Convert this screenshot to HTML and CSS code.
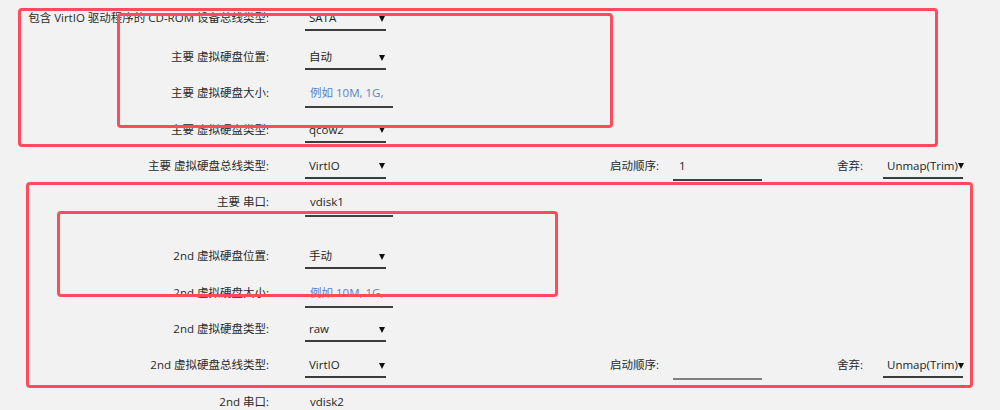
FILE: index.html
```html
<!DOCTYPE html>
<html lang="zh-CN">
<head>
  <meta charset="UTF-8" />
  <meta name="viewport" content="width=device-width, initial-scale=1" />
  <title>虚拟机设置</title>
  <link rel="stylesheet" href="styles.css">
</head>
<body>
  <div class="form">
    <div class="row first">
      <label class="lbl">包含 VirtIO 驱动程序的 CD-ROM 设备总线类型:</label>
      <div class="select"><span>SATA</span><i class="caret"></i></div>
    </div>

    <!-- 主要 磁盘 -->
    <div class="row">
      <label class="lbl">主要 虚拟硬盘位置:</label>
      <div class="select"><span>自动</span><i class="caret"></i></div>
    </div>
    <div class="row">
      <label class="lbl">主要 虚拟硬盘大小:</label>
      <div class="input placeholder">例如 10M, 1G,</div>
    </div>
    <div class="row">
      <label class="lbl">主要 虚拟硬盘类型:</label>
      <div class="select"><span>qcow2</span><i class="caret"></i></div>
    </div>
    <div class="row">
      <label class="lbl">主要 虚拟硬盘总线类型:</label>
      <div class="select"><span>VirtIO</span><i class="caret"></i></div>
      <label class="lbl boot">启动顺序:</label>
      <div class="input short">1</div>
      <label class="lbl discard">舍弃:</label>
      <div class="select trim"><span>Unmap(Trim)</span><i class="caret"></i></div>
    </div>
    <div class="row">
      <label class="lbl">主要 串口:</label>
      <div class="input">vdisk1</div>
    </div>

    <!-- 2nd 磁盘 -->
    <div class="spacer"></div>
    <div class="row">
      <label class="lbl">2nd 虚拟硬盘位置:</label>
      <div class="select"><span>手动</span><i class="caret"></i></div>
    </div>
    <div class="row">
      <label class="lbl">2nd 虚拟硬盘大小:</label>
      <div class="input placeholder">例如 10M, 1G,</div>
    </div>
    <div class="row">
      <label class="lbl">2nd 虚拟硬盘类型:</label>
      <div class="select"><span>raw</span><i class="caret"></i></div>
    </div>
    <div class="row">
      <label class="lbl">2nd 虚拟硬盘总线类型:</label>
      <div class="select"><span>VirtIO</span><i class="caret"></i></div>
      <label class="lbl boot">启动顺序:</label>
      <div class="input short empty"></div>
      <label class="lbl discard">舍弃:</label>
      <div class="select trim"><span>Unmap(Trim)</span><i class="caret"></i></div>
    </div>
    <div class="row">
      <label class="lbl">2nd 串口:</label>
      <div class="input">vdisk2</div>
    </div>
  </div>

  <!-- 标注框 -->
  <div class="mark m1"></div>
  <div class="mark m2"></div>
  <div class="mark m3"></div>
  <div class="mark m4"></div>
</body>
</html>
```

FILE: styles.css
```css
* {
  box-sizing: border-box;
}

html, body {
  height: 100%;
}

body {
  margin: 0;
  background: #f2f2f2;
  font-family: 'Open Sans', 'Noto Sans CJK SC', sans-serif;
  font-size: 11.5px;
  color: #2a2a2a;
  overflow: hidden;
  position: relative;
}

.row {
  display: flex;
  align-items: flex-start;
  height: 36.3px;
}

.row.first {
  height: 39px;
}

.spacer {
  height: 18px;
}

.lbl {
  width: 269px;
  margin-right: 36px;
  text-align: right;
  line-height: 36px;
  white-space: nowrap;
}

.lbl.boot {
  width: 273px;
  margin-right: 14px;
}

.lbl.discard {
  width: 101px;
  margin-right: 20px;
}

/* 下拉框 */
.select {
  width: 81px;
  height: 24px;
  margin-top: 7px;
  padding: 0 1px 0 4px;
  display: flex;
  justify-content: space-between;
  align-items: center;
  line-height: 22px;
  color: #1e1e1e;
  border-bottom: 2px solid #3c3c3c;
}

.select.trim {
  width: 80px;
  padding: 0 3px 0 4px;
  white-space: nowrap;
}

.caret {
  width: 0;
  height: 0;
  border-left: 3px solid transparent;
  border-right: 3px solid transparent;
  border-top: 6px solid #111;
  margin-top: 1px;
}

/* 输入框 */
.input {
  width: 88px;
  height: 28px;
  margin-top: 5px;
  padding-left: 5px;
  line-height: 26px;
  color: #1e1e1e;
  border-bottom: 2px solid #404040;
}

.input.short {
  width: 89px;
  padding-left: 6px;
}

.input.empty {
  border-bottom-color: #808080;
}

.input.placeholder {
  color: #5583cc;
}

/* 红色标注框 */
.mark {
  position: absolute;
  border: 3px solid #ff4b5c;
  border-radius: 4px;
}

.m1 {
  left: 18px;
  top: 8px;
  width: 920px;
  height: 139px;
}

.m2 {
  left: 117px;
  top: 13px;
  width: 496px;
  height: 115px;
}

.m3 {
  left: 26px;
  top: 182px;
  width: 947px;
  height: 206px;
}

.m4 {
  left: 57px;
  top: 211px;
  width: 501px;
  height: 86px;
}
```
